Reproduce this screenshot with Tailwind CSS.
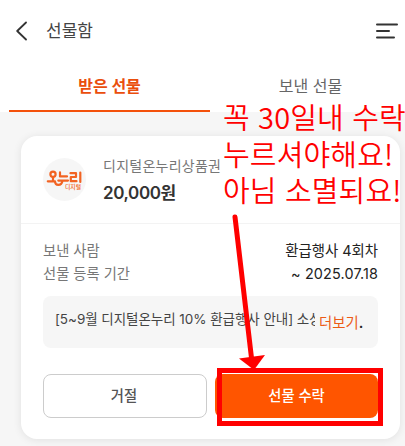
<!DOCTYPE html>
<html lang="ko">
  <head>
    <meta charset="UTF-8" />
    <meta name="viewport" content="width=device-width, initial-scale=1.0" />
    <title>선물함</title>
    <script src="https://cdn.jsdelivr.net/npm/@tailwindcss/browser@4"></script>
  </head>
  <body
    class="relative w-[405px] h-[446px] overflow-hidden bg-[#f6f6f6] font-['Inter','Noto_Sans_CJK_KR',sans-serif] whitespace-nowrap"
  >
    <!-- Header -->
    <header class="flex h-[62px] items-center bg-white pl-4 pr-[7px]">
      <svg class="h-5 w-3" viewBox="0 0 12 20" fill="none" stroke="#333" stroke-width="1.8" stroke-linecap="round" stroke-linejoin="round">
        <path d="M10 1.5 1.2 10 10 18.5" />
      </svg>
      <h1 class="ml-[18px] text-[17px] leading-6 text-[#444]">선물함</h1>
      <svg class="ml-auto h-[18px] w-[22px]" viewBox="0 0 22 18" fill="none" stroke="#333" stroke-width="2" stroke-linecap="round">
        <path d="M1 2.5H21M1 9H13M1 15.5H18" />
      </svg>
    </header>

    <!-- Tabs -->
    <nav class="flex h-[50px] bg-white pl-[9px] text-base">
      <div class="flex w-[201px] shrink-0 items-center justify-center border-b-2 border-[#f4510b] font-bold text-[#ea4e0d]">받은 선물</div>
      <div class="flex w-[201px] shrink-0 items-center justify-center border-b-2 border-transparent text-[#666]">보낸 선물</div>
    </nav>

    <!-- Gift card -->
    <main class="pl-[21px] pt-6">
      <section class="h-[303px] w-[379px] rounded-2xl bg-white shadow-[0_1px_8px_rgba(0,0,0,0.09)]">
        <div class="flex h-[88px] items-center border-b border-[#f3f3f3] px-[22px]">
          <div class="flex h-[43px] w-[43px] items-center justify-center rounded-full bg-[#f6f6f6]">
            <svg class="h-[43px] w-[43px]" viewBox="0 0 43 43" fill="none" stroke="#f26322" stroke-width="2.2" stroke-linecap="round" stroke-linejoin="round">
              <circle cx="10" cy="16.3" r="2.6" />
              <path d="M10 19.5V23M4.8 23.3H12C12 28 18.5 28.5 19.5 22.8M17 14.4V18.4H24M15.3 22.6H25" />
              <path d="M27.5 15.2H33V19H27.8V23.2H33.5M37.3 14.6V24" />
              <text x="22" y="30.8" textLength="16" lengthAdjust="spacingAndGlyphs" fill="#f26322" stroke="none" font-size="6" font-weight="500">디지털</text>
            </svg>
          </div>
          <div class="ml-[17px]">
            <p class="text-sm leading-[22px] tracking-[0.25px] text-[#777]">디지털온누리상품권</p>
            <p class="mt-1 text-[17px] font-semibold leading-6 tracking-[-0.4px] text-[#333]">20,000원</p>
          </div>
        </div>

        <dl class="px-[22px] pt-[15px] text-[14.3px] leading-[23px]">
          <div class="flex justify-between">
            <dt class="text-[#777]">보낸 사람</dt>
            <dd class="text-[14.4px] text-[#222]">환급행사 4회차</dd>
          </div>
          <div class="flex justify-between">
            <dt class="text-[#777]">선물 등록 기간</dt>
            <dd class="text-[14.4px] tracking-[0.15px] text-[#222]">~ 2025.07.18</dd>
          </div>
        </dl>

        <div class="mx-[22px] mt-[11px] flex h-[52px] items-center rounded-lg bg-[#f6f6f6] pl-3">
          <p class="w-[260px] overflow-hidden pb-1.5 text-[13.5px] leading-5 tracking-[-0.05px] text-[#444]">[5~9월 디지털온누리 10% 환급행사 안내] 소상공인</p>
          <p class="ml-1 pt-0.5 text-[14.4px] leading-5 text-[#ec5b16]">더보기<span class="font-semibold text-[#222]">.</span></p>
        </div>

        <div class="mt-[26px] flex gap-2 px-[22px] text-[14.3px]">
          <button class="h-11 w-[164px] rounded-lg border border-[#ccc] pr-0.5 font-medium text-[#555]">거절</button>
          <button class="h-11 w-[163px] rounded-lg bg-[#ff5500] font-medium text-white">선물 수락</button>
        </div>
      </section>
    </main>

    <!-- Red annotation over the screen -->
    <p class="absolute left-[223px] top-[98px] font-['Noto_Sans_CJK_KR',sans-serif] text-[29px] font-[350] leading-[36.6px] tracking-[0.15px] text-[#ff0000]">
      꼭 30일내 수락<br />누르셔야해요!<br />아님 소멸되요!
    </p>
    <div class="absolute left-[217px] top-[368px] h-[58px] w-[166px] border-5 border-[#ff0000]"></div>
    <svg class="absolute left-0 top-0" width="405" height="446" viewBox="0 0 405 446">
      <path d="M235 217 251.5 358" stroke="#ff0000" stroke-width="5" stroke-linecap="round" />
      <path d="M239 358.5 265 355 254 370Z" fill="#ff0000" />
    </svg>
  </body>
</html>
